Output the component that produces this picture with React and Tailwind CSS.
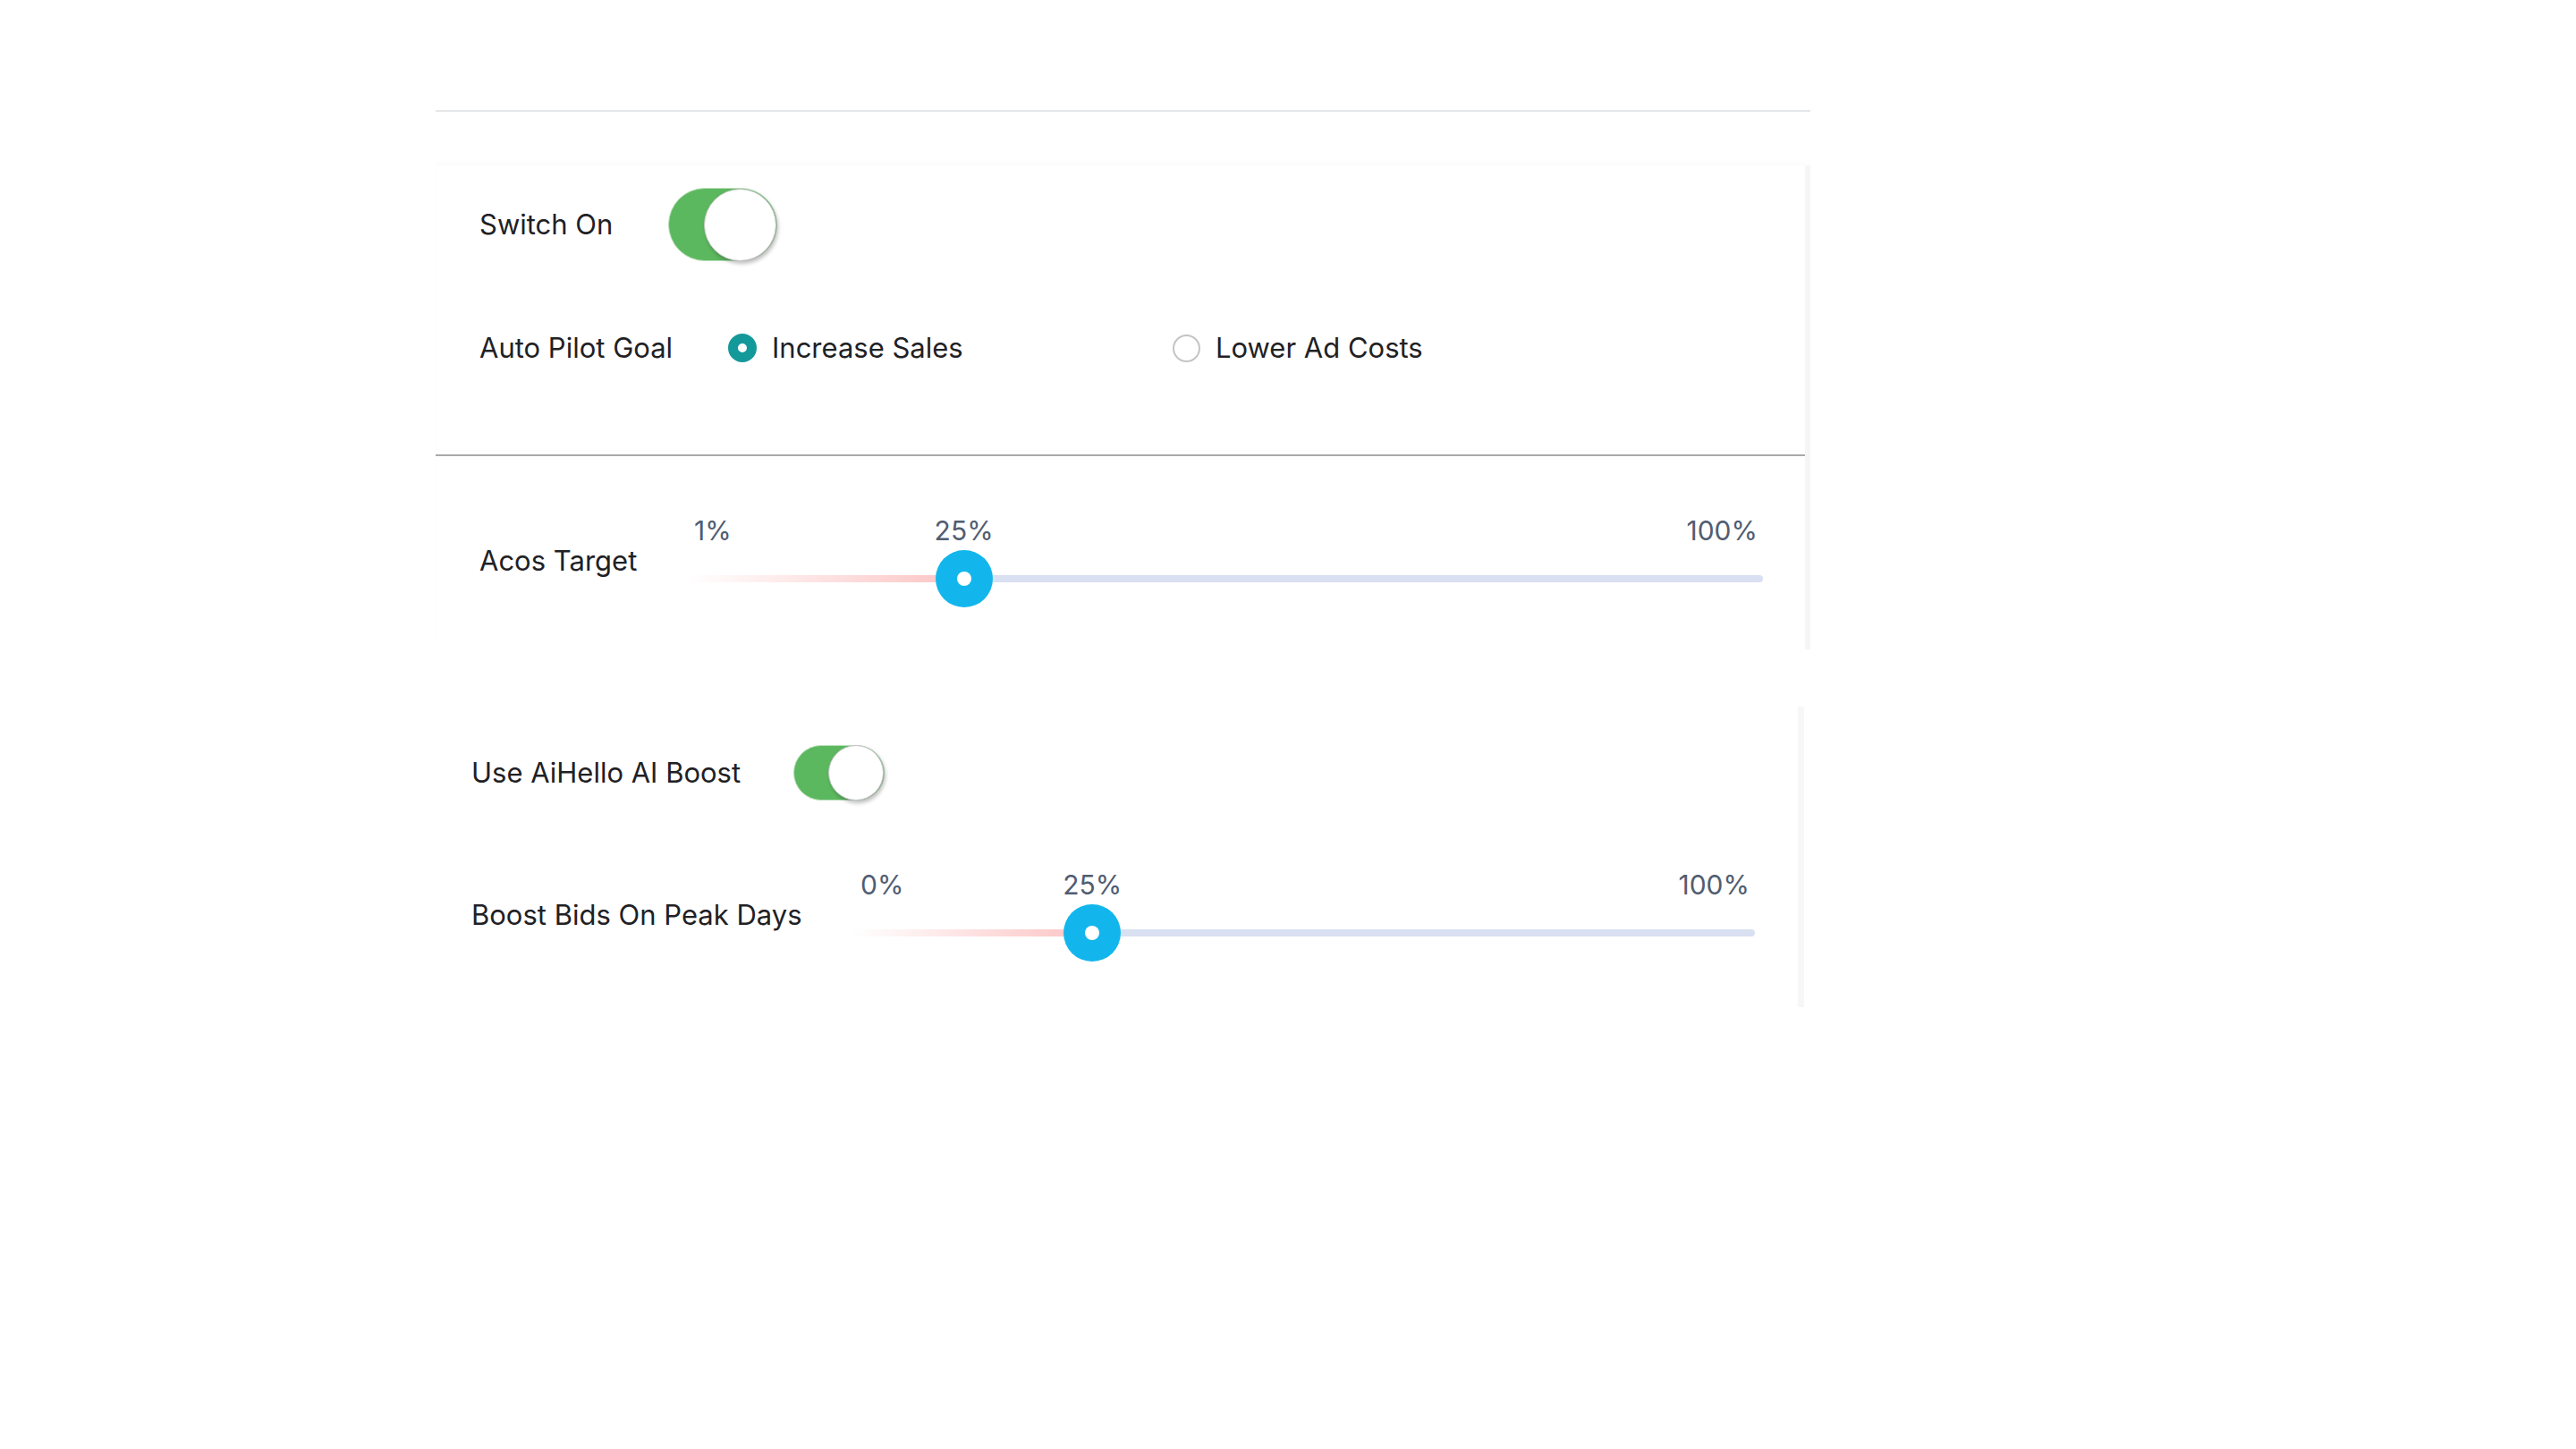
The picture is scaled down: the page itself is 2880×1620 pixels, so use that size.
import React, { useState } from 'react';

function Toggle({ on, onChange, size }) {
  const big = size === 'lg';
  return (
    <button
      type="button"
      onClick={() => onChange(!on)}
      className={`relative flex shrink-0 items-center rounded-full border border-[#b9dfba] ${
        on ? 'bg-[#5cb85f] justify-end' : 'bg-[#e9e9e9] justify-start'
      } ${big ? 'h-[82px] w-[122px]' : 'h-[62px] w-[102px]'}`}
    >
      <span
        className={`rounded-full border border-[#c4c4c4] bg-white shadow-[2px_3px_4px_rgba(0,0,0,0.25)] ${
          big ? 'h-[81px] w-[81px]' : 'h-[62px] w-[62px]'
        }`}
      />
    </button>
  );
}

function Radio({ checked, label, onSelect }) {
  return (
    <button type="button" onClick={onSelect} className="flex items-center gap-[17px]">
      {checked ? (
        <span className="h-[32px] w-[32px] rounded-full border-[11px] border-[#14999a] bg-white" />
      ) : (
        <span className="h-[31px] w-[31px] rounded-full border-2 border-[#c4c4c4] bg-white" />
      )}
      <span>{label}</span>
    </button>
  );
}

function RangeSlider({ min, max, value, minLeft }) {
  // thumb center travels from start+32px to end-32px, like a native range input
  const pct = (value - min) / (max - min);
  const pos = `calc(32px + ${pct} * (100% - 64px))`;
  return (
    <div className="flex-1">
      <div className="relative h-[34px] text-[30px] leading-[34px] text-[#515d71]">
        <span className={`absolute top-0 ${minLeft}`}>{min}%</span>
        <span className="absolute top-0 -translate-x-1/2" style={{ left: pos }}>
          {value}%
        </span>
        <span className="absolute right-[6px] top-0">{max}%</span>
      </div>
      <div className="relative mt-[5px] h-[64px]">
        <div
          className="absolute right-0 top-[28px] h-[8px] rounded-r-full bg-[#d8e0f1]"
          style={{ left: pos }}
        />
        <div
          className="absolute left-0 top-[28px] h-[8px] rounded-l-full bg-linear-to-r from-[#ffffff00] to-[#fcc3c3]"
          style={{ width: pos }}
        />
        <div
          className="absolute top-0 flex h-[64px] w-[64px] -translate-x-1/2 items-center justify-center rounded-full bg-[#12b6ec]"
          style={{ left: pos }}
        >
          <span className="h-[16px] w-[16px] rounded-full bg-white" />
        </div>
      </div>
    </div>
  );
}

export default function App() {
  const [autoPilot, setAutoPilot] = useState(true);
  const [goal, setGoal] = useState('sales');
  const [boost, setBoost] = useState(true);

  return (
    <div className="min-h-screen bg-white font-['Inter',sans-serif] text-[31px] text-[#1f2124]">
      <div className="ml-[487px] w-[1537px] pt-[123px]">
        <div className="h-[2px] bg-[#e4e6e8]" />

        {/* auto pilot card */}
        <div className="mt-[60px] border-r-[6px] border-r-[#f6f6f6] shadow-[0_-4px_6px_rgba(0,0,0,0.015)]">
          <div className="flex items-center pl-[49px] pt-[25px]">
            <span>Switch On</span>
            <div className="ml-[62px]">
              <Toggle on={autoPilot} onChange={setAutoPilot} size="lg" />
            </div>
          </div>

          <div className="mt-[77px] flex h-[40px] items-center pl-[49px]">
            <span className="w-[278px]">Auto Pilot Goal</span>
            <div className="w-[497px]">
              <Radio checked={goal === 'sales'} label="Increase Sales" onSelect={() => setGoal('sales')} />
            </div>
            <Radio checked={goal === 'costs'} label="Lower Ad Costs" onSelect={() => setGoal('costs')} />
          </div>

          <div className="mt-[99px] h-[2px] bg-[#a9a9a9]" />

          <div className="mt-[66px] flex items-center pb-[47px] pl-[49px] pr-[47px]">
            <span className="w-[234px]">Acos Target</span>
            <RangeSlider min={1} max={100} value={25} minLeft="left-[6px]" />
          </div>
        </div>

        {/* boost card */}
        <div className="mt-[64px] w-[1530px] border-r-[7px] border-r-[#f7f7f7] pb-[51px] pl-[40px] pr-[48px] pt-[43px]">
          <div className="flex items-center">
            <span>Use AiHello AI Boost</span>
            <div className="ml-[59px]">
              <Toggle on={boost} onChange={setBoost} size="md" />
            </div>
          </div>

          <div className="mt-[77px] flex items-center">
            <span className="w-[426px]">Boost Bids On Peak Days</span>
            <RangeSlider min={0} max={100} value={25} minLeft="left-[9px]" />
          </div>
        </div>
      </div>
    </div>
  );
}
